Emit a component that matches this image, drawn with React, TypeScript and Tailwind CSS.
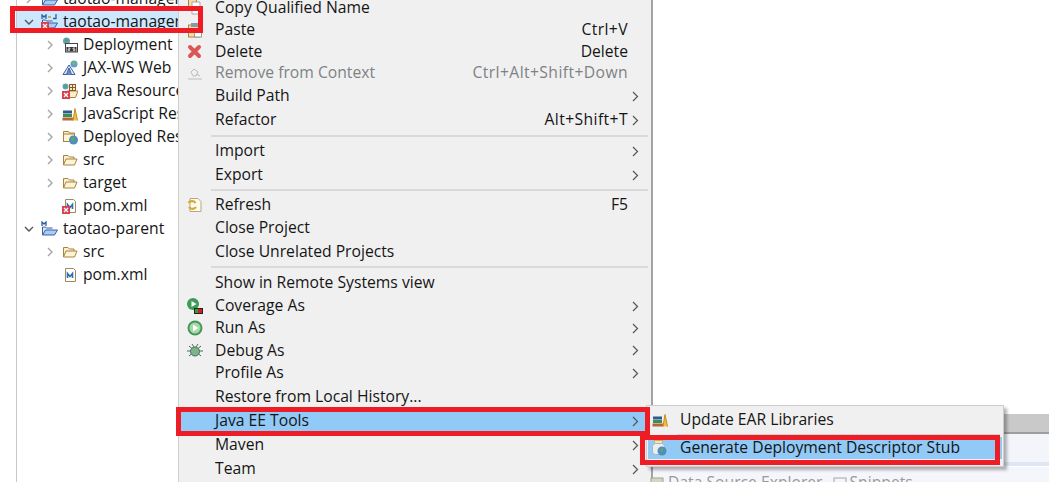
import React from "react";

const font = { fontFamily: '"Open Sans", "Noto Sans", sans-serif' };

const Chev = ({ open = false }: { open?: boolean }) => (
  <svg width="10" height="10" viewBox="0 0 10 10" fill="none" stroke={open ? "#555" : "#a6a6a6"} strokeWidth="1.4">
    {open ? <path d="M1 3l4 4 4-4" /> : <path d="M3 1l4 4-4 4" />}
  </svg>
);

const Xb = () => (
  <svg className="absolute left-0 bottom-0" width="8" height="8" viewBox="0 0 8 8">
    <rect width="8" height="8" fill="#d9404e" />
    <path d="M2 2l4 4M6 2L2 6" stroke="#fff" strokeWidth="1.2" />
  </svg>
);

const Folder = () => (
  <svg width="16" height="16" viewBox="0 0 16 16">
    <path d="M1.5 13V3.5h4.5l1.5 1.5h4.5V7" fill="#fbeec8" stroke="#a8843e" />
    <path d="M1.5 13l2.5-6h11l-2.5 6z" fill="#fdf3d6" stroke="#a8843e" />
  </svg>
);

const Pom = ({ err }: { err?: boolean }) => (
  <span className="relative w-[16px] h-[16px] block">
    <svg width="16" height="16" viewBox="0 0 16 16">
      <path d="M3.5 1.5h8l2 2v11h-10z" fill="#fff" stroke="#9b8a5e" />
      <path d="M5.5 11V6.5l2.5 3 2.5-3V11" fill="none" stroke="#2f6fb0" strokeWidth="1.6" />
    </svg>
    {err && <Xb />}
  </span>
);

const Proj = ({ err, j }: { err?: boolean; j?: boolean }) => (
  <span className="relative w-[17px] h-[16px] block">
    <svg width="17" height="16" viewBox="0 0 17 16">
      <path d="M1.5 14V6h3l1 1h6" fill="#dbe9f7" stroke="#3a5ea8" />
      <path d="M1.5 14l3-5h12l-3 5z" fill="#a9cdf0" stroke="#3a5ea8" />
      <path d="M1 5V1l2 2 2-2v4" fill="none" stroke="#2a5f9e" strokeWidth="1.3" />
      {j && <path d="M15 0v4.5h-3" fill="none" stroke="#2a5f9e" strokeWidth="1.3" />}
      {j && <path d="M7 3h3" stroke="#c68a2e" strokeWidth="1.3" />}
    </svg>
    {err && <Xb />}
  </span>
);

const Dd = () => (
  <svg width="16" height="16" viewBox="0 0 16 16">
    <circle cx="4.5" cy="4" r="3.5" fill="#5f9fc9" />
    <path d="M2.5 3l2-1.5 2 2-3 1.5z" fill="#5ea53f" />
    <rect x="3.5" y="6.5" width="12" height="8.5" fill="#fff" stroke="#444" />
    <rect x="4.5" y="10" width="10" height="4.5" fill="#333" />
    <path d="M6 11h2v1.2H6v1.2h2M11 11h2M11 11v1.2h2v1.2h-2" fill="none" stroke="#fff" strokeWidth="0.7" />
  </svg>
);

const Ws = () => (
  <svg width="16" height="16" viewBox="0 0 16 16">
    <path d="M1 14.5L7 5l6 9.5z" fill="#dfe7f4" stroke="#3d5fa6" />
    <path d="M4.5 14.5L7 8l2.5 6.5" fill="#6f8dcc" stroke="#3d5fa6" />
    <circle cx="12" cy="4" r="3.5" fill="#5f9fc9" />
    <path d="M10 3l2-1.5 2 2-2 1.5z" fill="#7dba5e" />
  </svg>
);

const JavaRes = () => (
  <span className="relative w-[16px] h-[16px] block">
    <svg width="16" height="16" viewBox="0 0 16 16">
      <circle cx="3.5" cy="3.5" r="3" fill="#5f9fc9" />
      <path d="M2 3l2-1 1 2-2 1z" fill="#5ea53f" />
      <path d="M5 8h11l-2.5 6.5H3z" fill="#fbeec8" stroke="#a8843e" />
      <rect x="7.5" y="1.5" width="6" height="6" fill="#f6e8c4" stroke="#8a5a2a" />
      <path d="M10.5 1.5v6M7.5 4.5h6" stroke="#8a5a2a" />
    </svg>
    <Xb />
  </span>
);

const Books = () => (
  <svg width="16" height="16" viewBox="0 0 16 16">
    <rect x="1" y="4.5" width="9" height="3" fill="#2b5d8f" />
    <rect x="1" y="8" width="9" height="3" fill="#3d8f4f" />
    <rect x="0.5" y="11.5" width="11" height="3" fill="#b5653a" />
    <path d="M11 14.5l2-12 2.5 12" fill="#f0c040" stroke="#c98a20" />
  </svg>
);

const Deployed = () => (
  <svg width="16" height="16" viewBox="0 0 16 16">
    <path d="M1.5 12.5V2.5h5l1 1.5h5V8" fill="#fbeec8" stroke="#a8843e" />
    <rect x="1.5" y="5" width="11" height="7.5" fill="#fdf3d6" stroke="#a8843e" />
    <circle cx="11.5" cy="11" r="4.5" fill="#4f8fc0" />
    <path d="M9 9.5l2.5-1.5 1.5 2-2.5 2z" fill="#6aaa48" />
  </svg>
);

const Row = ({ depth, open, chev = true, icon, label, sel }: any) => (
  <div className={`flex items-center whitespace-nowrap h-[23px] ${depth ? "pl-[28px]" : "pl-[7px]"} ${sel ? "bg-[#cce8ff]" : ""}`}>
    <span className="w-[17px] flex shrink-0">{chev && <Chev open={open} />}</span>
    <span className={`shrink-0 ${depth ? "w-[16px]" : "w-[17px]"}`}>{icon}</span>
    <span className="ml-[5px] text-[15.7px] text-[#151515]">{label}</span>
  </div>
);

const MenuRow = ({ label, right, arrow, icon, h, dim, hi, wide }: any) => {
  const tc = dim ? "text-[#7d8285]" : "text-[#151515]";
  return (
    <div className={`flex items-center ${h} ${hi ? "bg-[#91c9f7]" : ""}`}>
      <span className="w-[36px] shrink-0 flex pl-[8px]">{icon}</span>
      <span className={`text-[15.7px] whitespace-nowrap ${tc}`}>{label}</span>
      <span className={`ml-auto text-[15.7px] whitespace-nowrap ${wide ? "tracking-[0.4px]" : ""} ${tc}`}>{right}</span>
      <span className="w-[23px] shrink-0 flex pl-[3px]">
        {arrow && (
          <svg width="9" height="11" viewBox="0 0 9 11" fill="none" stroke="#555" strokeWidth="1.2">
            <path d="M2 1l4.5 4.5L2 10" />
          </svg>
        )}
      </span>
    </div>
  );
};

const Sep = ({ h }: { h: string }) => (
  <div className={`${h} flex items-center pl-[32px] pr-[3px]`}>
    <div className="h-[2px] w-full bg-[#d9d9d9]" />
  </div>
);

const RedBox = ({ c }: { c: string }) => <div className={`absolute border-[5px] border-[#ee1c25] ${c}`} />;

const Ico = {
  Copy: () => (
    <svg width="16" height="16" viewBox="0 0 16 16">
      <path d="M1.5 0v8h8V0" fill="#f3dca5" stroke="#a8843e" />
      <path d="M5 2h8v12H5z" fill="#fff" stroke="#a9a9a9" />
    </svg>
  ),
  Paste: () => (
    <svg width="16" height="16" viewBox="0 0 16 16">
      <rect x="1.5" y="3" width="11" height="12" fill="#f3dca5" stroke="#a8843e" />
      <rect x="4" y="1" width="7" height="4" fill="#8c98a8" />
      <rect x="7.5" y="7" width="7" height="8" fill="#fff" stroke="#999" />
    </svg>
  ),
  Del: () => (
    <svg width="16" height="16" viewBox="0 0 16 16"><path d="M3 3l9 9M12 3l-9 9" stroke="#dd5656" strokeWidth="4" strokeLinecap="round" /></svg>
  ),
  Rem: () => (
    <svg width="16" height="16" viewBox="0 0 16 16" fill="none" stroke="#bcbcbc"><path d="M1 14h14" /><path d="M4 7l3-3 4 3-2 4H6zM9 9l4 2" /></svg>
  ),
  Ref: () => (
    <svg width="16" height="16" viewBox="0 0 16 16">
      <path d="M3 1.5h8l3 3v10H3z" fill="#fbfbf2" stroke="#b9a878" />
      <path d="M1.5 6a4 3.5 0 017 0M9 10a4 3.5 0 01-7 0" fill="none" stroke="#d9a62e" strokeWidth="2.2" />
    </svg>
  ),
  Cov: () => (
    <svg width="16" height="16" viewBox="0 0 16 16">
      <circle cx="6" cy="6" r="6" fill="#3f9a58" />
      <path d="M4.5 3l5 3-5 3z" fill="#fff" />
      <rect x="7.5" y="10.5" width="8" height="5" fill="#d42020" stroke="#222" />
      <rect x="8" y="11" width="3" height="4" fill="#2ea02e" />
    </svg>
  ),
  Run: () => (
    <svg width="16" height="16" viewBox="0 0 16 16">
      <circle cx="8" cy="8" r="7.5" fill="#3f9a58" />
      <circle cx="8" cy="8" r="5.5" fill="#a9d8a8" />
      <path d="M6 4.5l5.5 3.5L6 11.5z" fill="#fff" />
    </svg>
  ),
  Dbg: () => (
    <svg width="16" height="16" viewBox="0 0 16 16">
      <path d="M2 3l12 10M14 3L2 13M0 8h16M5 1l2 3M11 1L9 4" stroke="#4d6a5c" />
      <ellipse cx="8" cy="8.5" rx="4.5" ry="4.5" fill="#7fb38c" stroke="#45705a" />
    </svg>
  ),
  Gen: () => (
    <svg width="16" height="16" viewBox="0 0 16 16">
      <rect x="2.5" y="0.5" width="8" height="3" fill="#f2e3b0" stroke="#c8b070" />
      <rect x="0.5" y="3.5" width="12" height="11" rx="3" fill="#e9eef4" stroke="#a9b4c0" />
      <circle cx="10" cy="11" r="4.5" fill="#4f8fc0" />
      <path d="M7.5 10l2.5-2 1.5 2-2 2z" fill="#6aaa48" />
    </svg>
  ),
};

export default function App() {
  return (
    <div className="relative w-[1049px] h-[482px] overflow-hidden bg-white flex" style={font}>
      <div className="w-[178px] shrink-0 ml-[16px] border-l border-[#c9c9c9] overflow-hidden">
        <div className="-mt-[13px]">
          <Row icon={<Proj />} label="taotao-manager" />
          <Row open sel icon={<Proj err j />} label="taotao-manager" />
          <Row depth icon={<Dd />} label="Deployment" />
          <Row depth icon={<Ws />} label="JAX-WS Web" />
          <Row depth icon={<JavaRes />} label="Java Resources" />
          <Row depth icon={<Books />} label="JavaScript Res" />
          <Row depth icon={<Deployed />} label="Deployed Res" />
          <Row depth icon={<Folder />} label="src" />
          <Row depth icon={<Folder />} label="target" />
          <Row depth chev={false} icon={<Pom err />} label="pom.xml" />
          <Row open icon={<Proj />} label="taotao-parent" />
          <Row depth icon={<Folder />} label="src" />
          <Row depth chev={false} icon={<Pom />} label="pom.xml" />
        </div>
      </div>

      <div className="w-[475px] shrink-0 -ml-[16px] bg-[#f0f0f0] border-l border-l-[#cfcfcf] border-r-2 border-r-[#a3a3a3] overflow-hidden">
        <div className="-mt-[3px]">
          <MenuRow h="h-[22px]" icon={<Ico.Copy />} label="Copy Qualified Name" />
          <MenuRow h="h-[22px]" wide icon={<Ico.Paste />} label="Paste" right="Ctrl+V" />
          <MenuRow h="h-[21px]" icon={<Ico.Del />} label="Delete" right="Delete" />
          <MenuRow h="h-[22px]" wide dim icon={<Ico.Rem />} label="Remove from Context" right="Ctrl+Alt+Shift+Down" />
          <MenuRow h="h-[24px]" arrow label="Build Path" />
          <MenuRow h="h-[24px]" wide arrow label="Refactor" right="Alt+Shift+T" />
          <Sep h="h-[7px]" />
          <MenuRow h="h-[24px]" arrow label="Import" />
          <MenuRow h="h-[24px]" arrow label="Export" />
          <Sep h="h-[6px]" />
          <MenuRow h="h-[24px]" icon={<Ico.Ref />} label="Refresh" right="F5" />
          <MenuRow h="h-[22px]" label="Close Project" />
          <MenuRow h="h-[26px]" label="Close Unrelated Projects" />
          <Sep h="h-[4px]" />
          <MenuRow h="h-[28px]" label="Show in Remote Systems view" />
          <MenuRow h="h-[18px]" arrow icon={<Ico.Cov />} label="Coverage As" />
          <MenuRow h="h-[26px]" arrow icon={<Ico.Run />} label="Run As" />
          <MenuRow h="h-[19px]" arrow icon={<Ico.Dbg />} label="Debug As" />
          <MenuRow h="h-[26px]" arrow label="Profile As" />
          <MenuRow h="h-[22px]" label="Restore from Local History..." />
          <MenuRow h="h-[26px]" hi arrow label="Java EE Tools" />
          <MenuRow h="h-[22px]" arrow label="Maven" />
          <MenuRow h="h-[26px]" arrow label="Team" />
        </div>
      </div>

      <div className="flex-1 flex flex-col">
        <div className="h-[414px]" />
        <div className="h-[20px] bg-[#c9c9c9] border-b-2 border-[#9e9e9e]" />
        <div className="h-[28px] bg-[#f3f5fb]" />
        <div className="h-[4px] bg-[#dfe5f5]" />
        <div className="h-px bg-white" />
        <div className="flex-1 bg-[#f5f6fb]" />
      </div>

      <div className="absolute left-[650px] top-[471px] flex items-center text-[15.7px] text-[#9a9a9a] whitespace-nowrap">
        <svg width="14" height="14" viewBox="0 0 14 14" className="mr-[4px]">
          <rect x="1" y="2" width="12" height="11" fill="#cfd8c4" stroke="#9aa88a" />
        </svg>
        <span>Data Source Explorer</span>
        <svg width="14" height="14" viewBox="0 0 14 14" className="ml-[10px] mr-[3px]">
          <rect x="1" y="2" width="12" height="11" fill="#f5f6fb" stroke="#a5a5a5" />
        </svg>
        <span>Snippets</span>
      </div>

      <div className="absolute left-[646px] top-[405px] w-[358px] h-[62px] bg-[#f0f0f0] border border-[#cdcdcd] shadow-[3px_3px_3px_rgba(0,0,0,0.3)] flex flex-col">
        <div className="h-[27px] flex items-center pl-[5px]">
          <span className="w-[28px] shrink-0"><Books /></span>
          <span className="text-[15.7px] text-[#151515] whitespace-nowrap">Update EAR Libraries</span>
        </div>
        <div className="h-[3px] pl-[30px] pr-[3px] flex items-center"><div className="h-px w-full bg-[#d0d0d0]" /></div>
        <div className="h-[22px] mt-[1px] mx-[1px] flex items-center pl-[4px] bg-[#91c9f7]">
          <span className="w-[28px] shrink-0"><Ico.Gen /></span>
          <span className="text-[15.7px] text-[#151515] whitespace-nowrap">Generate Deployment Descriptor Stub</span>
        </div>
      </div>

      <RedBox c="left-[10px] top-[6px] w-[193px] h-[27px]" />
      <RedBox c="left-[176px] top-[407px] w-[474px] h-[29px]" />
      <RedBox c="left-[640px] top-[435px] w-[360px] h-[30px]" />
    </div>
  );
}
